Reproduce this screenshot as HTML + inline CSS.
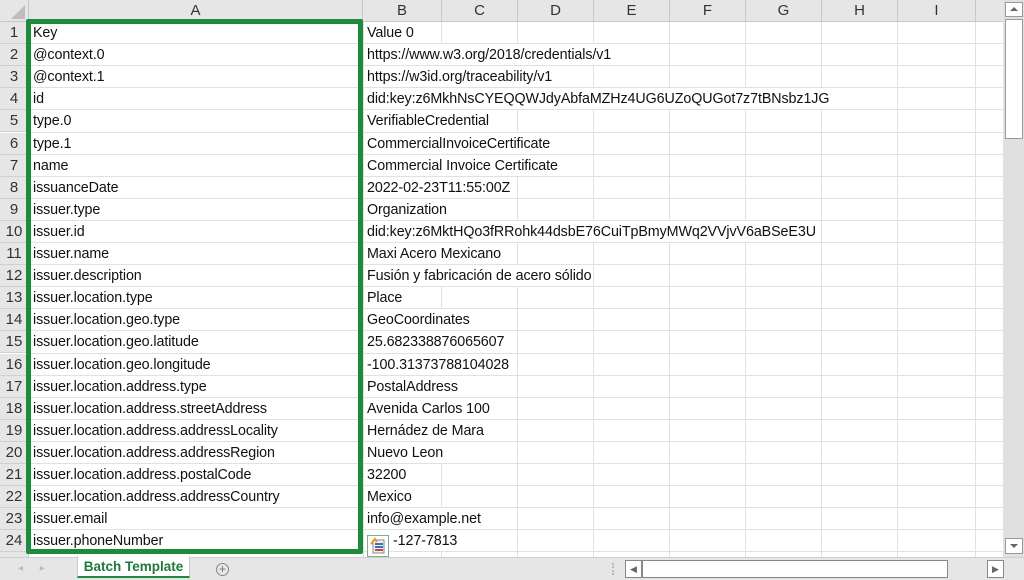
<!DOCTYPE html>
<html><head><meta charset="utf-8"><style>
*{margin:0;padding:0;box-sizing:border-box}
body{width:1024px;height:580px;overflow:hidden;background:#fff;font-family:"Liberation Sans",sans-serif;position:relative}
.abs{position:absolute}
.hdr{position:absolute;top:0;height:22px;background:#e6e6e6;border-right:1px solid #c8c8c8;border-bottom:1px solid #c8c8c8;font-size:15px;color:#333;text-align:center;line-height:22px}
.rn{position:absolute;left:0;width:29px;background:#e6e6e6;border-bottom:1px solid #d0d0d0;border-right:1px solid #c8c8c8;font-size:15px;color:#333;text-align:center;line-height:22px}
.hl{position:absolute;left:29px;width:975px;height:1px;background:#e1e1e1}
.vl{position:absolute;top:22px;width:1px;height:535px;background:#e1e1e1}
.t{position:absolute;font-size:14.3px;color:#111;line-height:22px;height:21px;background:#fff;white-space:nowrap;letter-spacing:-0.1px;padding-right:2px}
</style></head><body>
<div class="hdr" style="left:0;width:29px"><svg width="29" height="22"><polygon points="25,5 25,19 11,19" fill="#bdbdbd"/></svg></div>
<div class="hdr" style="left:29px;width:334px">A</div>
<div class="hdr" style="left:363px;width:79px">B</div>
<div class="hdr" style="left:442px;width:76px">C</div>
<div class="hdr" style="left:518px;width:76px">D</div>
<div class="hdr" style="left:594px;width:76px">E</div>
<div class="hdr" style="left:670px;width:76px">F</div>
<div class="hdr" style="left:746px;width:76px">G</div>
<div class="hdr" style="left:822px;width:76px">H</div>
<div class="hdr" style="left:898px;width:78px">I</div>
<div class="hdr" style="left:976px;width:28px"></div>
<div class="vl" style="left:363px"></div><div class="vl" style="left:441px"></div><div class="vl" style="left:517px"></div><div class="vl" style="left:593px"></div><div class="vl" style="left:669px"></div><div class="vl" style="left:745px"></div><div class="vl" style="left:821px"></div><div class="vl" style="left:897px"></div><div class="vl" style="left:975px"></div>
<div id="rows"></div>
<script>
(function(){
var k=["Key","@context.0","@context.1","id","type.0","type.1","name","issuanceDate","issuer.type","issuer.id","issuer.name","issuer.description","issuer.location.type","issuer.location.geo.type","issuer.location.geo.latitude","issuer.location.geo.longitude","issuer.location.address.type","issuer.location.address.streetAddress","issuer.location.address.addressLocality","issuer.location.address.addressRegion","issuer.location.address.postalCode","issuer.location.address.addressCountry","issuer.email","issuer.phoneNumber"];
var v=["Value 0","https://www.w3.org/2018/credentials/v1","https://w3id.org/traceability/v1","did:key:z6MkhNsCYEQQWJdyAbfaMZHz4UG6UZoQUGot7z7tBNsbz1JG","VerifiableCredential","CommercialInvoiceCertificate","Commercial Invoice Certificate","2022-02-23T11:55:00Z","Organization","did:key:z6MktHQo3fRRohk44dsbE76CuiTpBmyMWq2VVjvV6aBSeE3U","Maxi Acero Mexicano","Fusión y fabricación de acero sólido","Place","GeoCoordinates","25.682338876065607","-100.31373788104028","PostalAddress","Avenida Carlos 100","Hernádez de Mara","Nuevo Leon","32200","Mexico","info@example.net","-127-7813"];
var h="";
for(var i=0;i<25;i++){var y=22+i*22.1;
h+='<div class="rn" style="top:'+y+'px;height:22.1px">'+(i<24?i+1:'')+'</div>';
h+='<div class="hl" style="top:'+(y+21.1)+'px"></div>';
if(i<24){h+='<div class="t" style="left:33px;top:'+y+'px">'+k[i]+'</div>';
h+='<div class="t" style="left:'+(i==23?393:367)+'px;top:'+y+'px">'+v[i]+'</div>';}}
document.getElementById('rows').innerHTML=h;
})();
</script>
<div class="abs" style="left:26px;top:19px;width:337px;height:535px;border:5px solid #1e8a3e;border-radius:2px"></div>
<div class="abs" style="left:367px;top:535px;width:22px;height:22px;border:1px solid #7fb08a;background:#fff"><svg width="20" height="20"><rect x="5" y="4" width="11" height="13" fill="#f2f2f2" stroke="#888"/><rect x="7" y="7" width="8" height="2" fill="#3a6fc4"/><rect x="7" y="10" width="8" height="2" fill="#3a6fc4"/><rect x="7" y="13" width="8" height="2" fill="#d04040"/><path d="M3 8 L7 3 L9 6" stroke="#e59a2a" stroke-width="2" fill="none"/></svg></div>
<div class="abs" style="left:1003px;top:0;width:21px;height:557px;background:#e0e0e0"></div>
<div class="abs" style="left:1005px;top:2px;width:18px;height:15px;border:1px solid #999;background:#fff"><svg width="16" height="13"><polygon points="4,8 12,8 8,4" fill="#666"/></svg></div>
<div class="abs" style="left:1005px;top:19px;width:18px;height:120px;border:1px solid #999;background:#fff"></div>
<div class="abs" style="left:1005px;top:538px;width:18px;height:16px;border:1px solid #999;background:#fff"><svg width="16" height="14"><polygon points="4,5 12,5 8,9" fill="#666"/></svg></div>
<div class="abs" style="left:0;top:557px;width:1024px;height:23px;background:#e6e6e6;border-top:1px solid #cfcfcf"></div>
<div class="abs" style="left:18px;top:563px;font-size:10px;color:#bbb">◂&nbsp;&nbsp;&nbsp;&nbsp;&nbsp;&nbsp;▸</div>
<div class="abs" style="left:77px;top:556px;width:113px;height:22px;background:#fff;border-left:1px solid #ccc;border-right:1px solid #ccc;border-bottom:2px solid #1e8a3e;color:#1e7a3a;font-weight:bold;font-size:13.5px;text-align:center;line-height:22px">Batch Template</div>
<div class="abs" style="left:216px;top:563px;width:13px;height:13px;border:1px solid #888;border-radius:50%;font-size:12px;line-height:11px;text-align:center;color:#777">+</div>
<div class="abs" style="left:612px;top:563px;width:2px;height:12px;border-left:2px dotted #bbb"></div>
<div class="abs" style="left:625px;top:560px;width:17px;height:18px;border:1px solid #888;background:#fff;font-size:9px;color:#666;text-align:center;line-height:16px">◀</div>
<div class="abs" style="left:642px;top:560px;width:306px;height:18px;border:1px solid #888;background:#fff"></div>
<div class="abs" style="left:987px;top:560px;width:17px;height:18px;border:1px solid #888;background:#fff;font-size:9px;color:#666;text-align:center;line-height:16px">▶</div>
</body></html>
